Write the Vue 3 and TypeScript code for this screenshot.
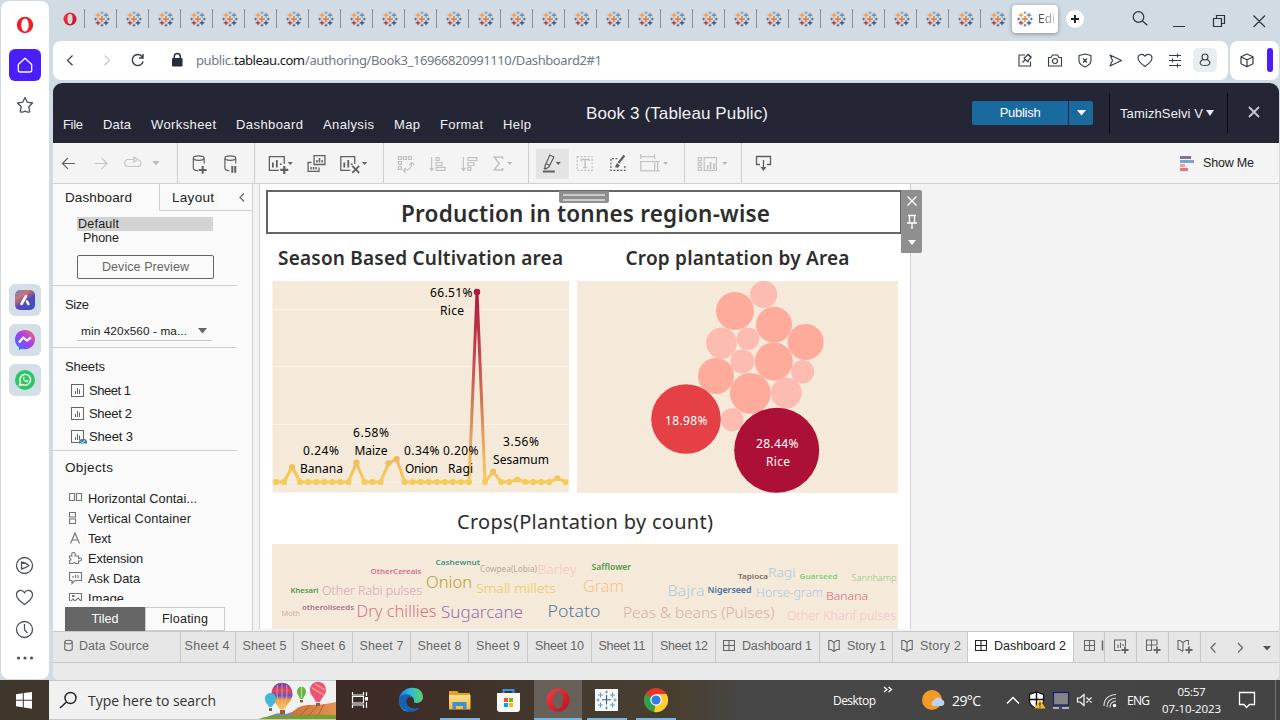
<script setup lang="ts">
interface Label { text: string; width: number }
interface Word { t: string; x: number; y: number; w: number; s: number; c: string; b?: boolean }

// Tracks a label out (or in) so that it occupies the given width.
const vFit = {
  mounted(el: HTMLElement, binding: { value: number }) {
    const range = document.createRange()
    range.selectNodeContents(el)
    const natural = range.getBoundingClientRect().width
    const count = Math.max(1, (el.textContent || '').length - 1)
    el.style.letterSpacing = `${(binding.value - natural) / count}px`
    el.style.width = `${binding.value}px`
  },
}

const tabs = Array.from({ length: 29 }, (_, i) => i)

const menus: Label[] = [
  { text: 'File', width: 20 },
  { text: 'Data', width: 28 },
  { text: 'Worksheet', width: 65 },
  { text: 'Dashboard', width: 67 },
  { text: 'Analysis', width: 51 },
  { text: 'Map', width: 26 },
  { text: 'Format', width: 43 },
  { text: 'Help', width: 28 },
]

const sheets: Label[] = [
  { text: 'Sheet 1', width: 42 },
  { text: 'Sheet 2', width: 43 },
  { text: 'Sheet 3', width: 44 },
]

const objects: (Label & { icon: string })[] = [
  { text: 'Horizontal Contai...', width: 109, icon: 'h' },
  { text: 'Vertical Container', width: 103, icon: 'v' },
  { text: 'Text', width: 23, icon: 't' },
  { text: 'Extension', width: 55, icon: 'e' },
  { text: 'Ask Data', width: 52, icon: 'a' },
  { text: 'Image', width: 36, icon: 'i' },
]

const bottomTabs: (Label & { cell: number; icon?: string; active?: boolean })[] = [
  { text: 'Data Source', width: 70, cell: 128, icon: 'db' },
  { text: 'Sheet 4', width: 45, cell: 55 },
  { text: 'Sheet 5', width: 44, cell: 58 },
  { text: 'Sheet 6', width: 45, cell: 59 },
  { text: 'Sheet 7', width: 44, cell: 58 },
  { text: 'Sheet 8', width: 44, cell: 58 },
  { text: 'Sheet 9', width: 44, cell: 59 },
  { text: 'Sheet 10', width: 49, cell: 64 },
  { text: 'Sheet 11', width: 47, cell: 61 },
  { text: 'Sheet 12', width: 48, cell: 63 },
  { text: 'Dashboard 1', width: 70, cell: 104, icon: 'grid' },
  { text: 'Story 1', width: 39, cell: 73, icon: 'book' },
  { text: 'Story 2', width: 41, cell: 75, icon: 'book' },
  { text: 'Dashboard 2', width: 72, cell: 106, icon: 'grid', active: true },
]

const raised: Record<number, number> = {
  2: 467, 10: 462.7, 14: 463.3, 15: 459, 25: 292, 27: 471.7, 30: 479.5, 35: 478.3,
}
const points = Array.from({ length: 37 }, (_, i) => ({ x: 276 + 8.04 * i, y: raised[i] ?? 482 }))
const line = points.map((p) => `${p.x.toFixed(1)},${p.y}`).join(' ')

const areaLabels: Word[] = [
  { t: '66.51%', x: 430, y: 297, w: 42.5, s: 12, c: '#000' },
  { t: 'Rice', x: 440, y: 315, w: 24, s: 12, c: '#000' },
  { t: '6.58%', x: 353, y: 437, w: 36, s: 12, c: '#000' },
  { t: 'Maize', x: 354.5, y: 455, w: 33, s: 12, c: '#000' },
  { t: '0.24%', x: 303, y: 455, w: 36, s: 12, c: '#000' },
  { t: 'Banana', x: 300, y: 473, w: 43, s: 12, c: '#000' },
  { t: '0.34%', x: 404, y: 455, w: 35.5, s: 12, c: '#000' },
  { t: 'Onion', x: 405, y: 473, w: 33, s: 12, c: '#000' },
  { t: '0.20%', x: 443, y: 455, w: 35.5, s: 12, c: '#000' },
  { t: 'Ragi', x: 448, y: 473, w: 25, s: 12, c: '#000' },
  { t: '3.56%', x: 503, y: 446, w: 36, s: 12, c: '#000' },
  { t: 'Sesamum', x: 493, y: 464, w: 56, s: 12, c: '#000' },
]

const bubbles: [number, number, number, string][] = [
  [735, 311, 19, '#feab9c'], [763.7, 294.5, 13.6, '#fdbcb1'], [774, 324.7, 18, '#feab9c'],
  [805.6, 342, 18, '#feab9c'], [721.5, 343, 15.4, '#fdbcb1'], [748, 338.7, 11.3, '#fdbcb1'],
  [742.4, 361.4, 12, '#fdbcb1'], [773.8, 361.4, 19, '#feab9c'], [802.7, 371.7, 11.6, '#fdbcb1'],
  [716, 376, 18, '#feab9c'], [750.4, 393.3, 20.4, '#feab9c'], [786.3, 393, 15.5, '#fdbcb1'],
  [732, 419.7, 11.5, '#fdbcb1'], [686, 419, 34.8, '#e44046'], [776.7, 450.3, 42.5, '#ad1037'],
]

const cloud: Word[] = [
  { t: 'OtherCereals', x: 370.5, y: 574, w: 51, s: 7.8, c: '#d4728f', b: true },
  { t: 'Cashewnut', x: 435.5, y: 565, w: 44.5, s: 7.8, c: '#3f9585', b: true },
  { t: 'Cowpea(Lobia)', x: 480, y: 572, w: 57, s: 8, c: '#b5a99c' },
  { t: 'Barley', x: 537.5, y: 574, w: 39, s: 12.5, c: '#f9c3cb' },
  { t: 'Onion', x: 426, y: 588, w: 46, s: 16, c: '#b99b2e' },
  { t: 'Small millets', x: 476, y: 593, w: 80, s: 12.5, c: '#edc860' },
  { t: 'Khesari', x: 290.5, y: 593, w: 28, s: 7.8, c: '#4d9a4a', b: true },
  { t: 'Other Rabi pulses', x: 322, y: 595, w: 100, s: 12.2, c: '#d3a4ba' },
  { t: 'Moth', x: 281.5, y: 616, w: 18.5, s: 7.8, c: '#d0ada2' },
  { t: 'otheroilseeds', x: 302, y: 610, w: 52, s: 7.8, c: '#a87093', b: true },
  { t: 'Dry chillies', x: 356.5, y: 617, w: 80, s: 15.5, c: '#d37288' },
  { t: 'Sugarcane', x: 441, y: 618, w: 82, s: 16, c: '#9a6aae' },
  { t: 'Potato', x: 547.5, y: 617, w: 53, s: 15.5, c: '#5477a0' },
  { t: 'Safflower', x: 591.5, y: 570, w: 39.5, s: 8, c: '#52964b', b: true },
  { t: 'Gram', x: 583, y: 592, w: 41, s: 16, c: '#f9be85' },
  { t: 'Tapioca', x: 738, y: 579, w: 30, s: 7.8, c: '#7b6960', b: true },
  { t: 'Ragi', x: 768, y: 577, w: 27.5, s: 12.5, c: '#a2c8df' },
  { t: 'Guarseed', x: 799.5, y: 579, w: 38, s: 7.8, c: '#86ca78', b: true },
  { t: 'Sannhamp', x: 851.5, y: 581, w: 45, s: 8.5, c: '#86ca78' },
  { t: 'Bajra', x: 667.5, y: 596, w: 37, s: 14, c: '#a6cbe0' },
  { t: 'Nigerseed', x: 707.5, y: 593, w: 44, s: 8.3, c: '#4c71a4', b: true },
  { t: 'Horse-gram', x: 756, y: 597, w: 67, s: 12, c: '#a6cbe0' },
  { t: 'Banana', x: 826, y: 600, w: 42, s: 11.5, c: '#d4607f' },
  { t: 'Peas & beans (Pulses)', x: 623, y: 618, w: 151.5, s: 15, c: '#d2b0a8' },
  { t: 'Other Kharif pulses', x: 787, y: 620, w: 109, s: 11.8, c: '#f5c3cf' },
]
</script>

<template>
  <div class="screen">
    <svg class="defs" width="0" height="0">
      <defs>
        <symbol id="tableau" viewBox="0 0 16 16">
          <path d="M8 5v6M5 8h6" stroke="#e8792b" stroke-width="1.4" />
          <path d="M4 1.8v4.6M1.7 4.1h4.6" stroke="#eb9a3c" stroke-width="1.1" />
          <path d="M12 1.8v4.6M9.7 4.1h4.6" stroke="#5b87a5" stroke-width="1.1" />
          <path d="M4 9.6v4.6M1.7 11.9h4.6" stroke="#c5203a" stroke-width="1.1" />
          <path d="M12 9.6v4.6M9.7 11.9h4.6" stroke="#1f4484" stroke-width="1.1" />
          <path d="M8 .4v2.8M6.6 1.8h2.8" stroke="#7199a6" stroke-width="1" />
          <path d="M8 12.8v2.8M6.6 14.2h2.8M.3 8h2.8M1.7 6.6v2.8M12.9 8h2.8M14.3 6.6v2.8" stroke="#5b6591" stroke-width="1" />
        </symbol>
        <linearGradient id="red" x1="0" y1="0" x2="1" y2="1">
          <stop offset="0" stop-color="#ff3b45" /><stop offset="1" stop-color="#b50e1c" />
        </linearGradient>
      </defs>
    </svg>

    <div class="browser">
      <aside class="rail">
        <svg width="49" height="680" viewBox="0 0 49 680">
          <rect x="1" y="1" width="48" height="678" rx="8" fill="#fff" />
          <ellipse cx="25" cy="25" rx="8.200" ry="8.200" fill="#ee1c2c" />
          <ellipse cx="25" cy="25" rx="3.700" ry="6.600" fill="#fff" />
          <rect x="9" y="49" width="32" height="32" rx="6" fill="#4b1eff" />
          <path d="M18.300 64.500l6.700-6.300 6.700 6.300V70a2 2 0 0 1-2 2h-9.400a2 2 0 0 1-2-2z" fill="none" stroke="#fff" stroke-width="1.300" stroke-linejoin="round" />
          <path d="M25 97.500l2.300 4.700 5.200.8-3.700 3.700.9 5.200q-2.400.9-4.700-.9-2.300 1.800-4.700.9l.9-5.200-3.700-3.700 5.200-.8z" fill="none" stroke="#4b525d" stroke-width="1.300" stroke-linejoin="round" />
          <rect v-for="y in [284, 324, 364]" :key="y" x="9" :y="y" width="32" height="32" rx="6" fill="#d3dee6" />
          <defs>
            <linearGradient id="aria" x1="0" y1="0" x2=".7" y2="1">
              <stop offset="0" stop-color="#4c93d5" /><stop offset=".35" stop-color="#cf716f" /><stop offset=".65" stop-color="#5447b8" /><stop offset="1" stop-color="#3a51c9" />
            </linearGradient>
            <linearGradient id="msg" x1="1" y1="0" x2="0" y2="1">
              <stop offset="0" stop-color="#ff6268" /><stop offset=".5" stop-color="#a53df5" /><stop offset="1" stop-color="#1583ff" />
            </linearGradient>
          </defs>
          <rect x="15" y="290" width="20" height="20" rx="5" fill="url(#aria)" />
          <path d="M21.500 304l4.500-8" stroke="#fff" stroke-width="2.600" stroke-linecap="round" /><path d="M27 301.500l1.300 2.500" stroke="#fff" stroke-width="2.600" stroke-linecap="round" />
          <path d="M25 330c5.600 0 10 4 10 9.600s-4.400 9.600-10 9.600c-1 0-2-.1-3-.4l-3 1.200v-2.600c-2.500-1.800-4-4.600-4-7.800 0-5.600 4.400-9.600 10-9.600z" fill="url(#msg)" />
          <path d="M19 342.500l4.200-5 3.600 3 4.200-3" fill="none" stroke="#fff" stroke-width="2.200" stroke-linejoin="round" />
          <circle cx="25" cy="380" r="10" fill="#29c862" />
          <path d="M19.500 385.500l.9-3.200a5.400 5.400 0 1 1 2.300 2.300z" fill="none" stroke="#fff" stroke-width="1.400" />
          <path d="M22.800 377.500c-.6 1.800 2.700 5.300 5 4.700.8-.3.700-1.200.5-1.500l-1.400-.7-.9.800c-1.100-.5-1.600-1-2-2l.7-.8-.7-1.300c-.5 0-.9.300-1.200.8z" fill="#fff" />
          <g fill="none" stroke="#4b525d" stroke-width="1.300">
            <circle cx="24.500" cy="565.500" r="8" /><path d="M21.500 562v7q4-.8 7.500-3.500-3.500-2.700-7.500-3.500z" stroke-linejoin="round" />
            <path d="M24.500 604.500c-4.500-3.200-8-6-8-9.600 0-5 6-6 8-2.200 2-3.800 8-2.800 8 2.200 0 3.600-3.500 6.400-8 9.600z" />
            <circle cx="24.500" cy="629.500" r="8" /><path d="M24.500 624v6l3 3" />
          </g>
          <g fill="#4b525d"><circle cx="18.500" cy="658" r="1.600" /><circle cx="25" cy="658" r="1.600" /><circle cx="31.500" cy="658" r="1.600" /></g>
        </svg>
      </aside>

      <div class="main">
        <div class="tabstrip">
          <svg class="opera" width="31" height="41" viewBox="53 0 31 41">
            <circle cx="70" cy="19" r="6.500" fill="url(#red)" /><ellipse cx="70" cy="19" rx="2.600" ry="5" fill="#d0dbe4" />
          </svg>
          <div v-for="t in tabs" :key="t" class="tab"><svg width="16" height="16"><use href="#tableau" /></svg></div>
          <div class="tab-active">
            <svg width="16" height="16"><use href="#tableau" /></svg><span class="edi">Edi</span>
          </div>
          <svg width="220" height="41" viewBox="1060 0 220 41">
            <circle cx="1075" cy="19" r="9" fill="#fff" />
            <path d="M1071 19h8M1075 15v8" stroke="#1c2430" stroke-width="2" />
            <g fill="none" stroke="#2b3340" stroke-width="1.200">
              <circle cx="1138.500" cy="17" r="5.300" /><path d="M1142.300 20.800l5 4.500" />
              <path d="M1173 26.500h12M1213.500 18.500h8v8h-8zM1216.500 18.500v-3h8v8h-3M1253.500 15.500l11.500 11.500M1265 15.500l-11.500 11.500" />
            </g>
          </svg>
        </div>

        <div class="address">
          <div class="bar">
            <svg width="143" height="39" viewBox="53 41 143 39">
              <path d="M72.500 55.500l-5 4.900 5 4.900" fill="none" stroke="#333b45" stroke-width="1.200" />
              <path d="M104.500 55.500l5 4.900-5 4.900" fill="none" stroke="#c4c9ce" stroke-width="1.200" />
              <path d="M142.300 56.800a5.500 5.500 0 1 0 .8 4.700M143 54v4h-4" fill="none" stroke="#333b45" stroke-width="1.400" />
              <rect x="172" y="58" width="10.500" height="8.500" rx="1" fill="#262f3a" /><path d="M174.300 58.500v-2a3 3 0 0 1 6 0v2" fill="none" stroke="#262f3a" stroke-width="1.500" />
            </svg>
            <div class="url"><span v-fit="38">public.</span><b v-fit="71">tableau.com</b><span v-fit="297">/authoring/Book3_16966820991110/Dashboard2#1</span></div>
            <svg class="push" width="218" height="39" viewBox="1010 41 218 39">
              <rect x="1193" y="48" width="24" height="24" rx="5" fill="#e8edf1" />
              <g fill="none" stroke="#333b45" stroke-width="1.100" stroke-linejoin="round">
                <path d="M1025 55h-6v11h11.500v-4.500M1022.500 62.500l3-3M1024 58l4 4 1-2.500 2-2-3-3-2 2zM1028 54l3.500 3.500" />
                <path d="M1048.500 57.500h2.500l1.500-2.500h5l1.500 2.500h2.500v8.500h-13z" /><circle cx="1055" cy="61" r="2.500" />
                <path d="M1085 54l6 1.500v5q0 4-6 6.500-6-2.500-6-6.500v-5zM1083 58.500l4 4M1087 58.500l-4 4" />
                <path d="M1110 55l11.500 5.500-11.500 5.500 2.500-5.500z" />
                <path d="M1145 66.500c-4-2.700-7-5.200-7-8.400 0-4 5-5 7-1.800 2-3.200 7-2.200 7 1.800 0 3.200-3 5.700-7 8.400z" />
                <path d="M1169 55.500h12M1169 60.500h12M1169 65.500h12M1177.500 53.500v4M1172.500 58.500v4M1177.500 63.500v4" />
                <circle cx="1205" cy="57" r="3" /><path d="M1202.800 59.500c-4.500 3-3 6 2.200 6s6.700-3 2.200-6" />
              </g>
            </svg>
          </div>
          <div class="side">
            <svg width="49" height="39" viewBox="1230 41 49 39">
              <path d="M1247 54l6 2.800v7l-6 3-6-3v-7zM1241 57l6 2.800 6-2.800M1247 60v7" fill="none" stroke="#333b45" stroke-width="1.200" stroke-linejoin="round" />
              <rect x="1267" y="48" width="6" height="24" rx="3" fill="#4b1eff" />
            </svg>
          </div>
        </div>

        <div class="app">
          <header>
            <nav><span v-for="m in menus" :key="m.text" v-fit="m.width">{{ m.text }}</span></nav>
            <h1><span v-fit="182">Book 3 (Tableau Public)</span></h1>
            <div class="publish"><div class="pub"><span v-fit="41">Publish</span></div><div class="pub-arrow"><svg width="9" height="6"><path d="M0 0h9l-4.500 5.500z" fill="#fff" /></svg></div></div>
            <div class="user"><span v-fit="83">TamizhSelvi V</span><svg width="8" height="7"><path d="M0 0h8l-4 6z" fill="#e8e8ee" /></svg></div>
            <svg class="close" width="12" height="12"><path d="M1 1l10 10M11 1l-10 10" stroke="#c9c9cf" stroke-width="1.800" /></svg>
          </header>

          <div class="toolbar">
            <svg width="125" height="40" viewBox="53 143 125 40" fill="none">
              <path d="M75 163.500h-12.500M68 158l-5.500 5.500 5.500 5.500" stroke="#5f5f5f" stroke-width="1.200" />
              <path d="M95 163.500h12.500M102 158l5.500 5.500-5.500 5.500" stroke="#c6c6c6" stroke-width="1.200" />
              <path d="M135 159.500h-7a3.600 3.600 0 0 0 0 7h10a3.300 3.300 0 0 0 .5-6.800M134.500 157l4 2.500-4 2.500z" stroke="#c6c6c6" stroke-width="1.200" />
              <path d="M153 161h7.500l-3.700 4.500z" fill="#bdbdbd" />
            </svg>
            <svg width="77" height="40" viewBox="178 143 77 40" fill="none" stroke="#5f5f5f" stroke-width="1.200">
              <path d="M193.500 158.500v9.500q0 2.500 5 3M204.500 158.500v5" /><ellipse cx="199" cy="158" rx="5.500" ry="2.300" /><path d="M203 166v8M199 170h8" stroke-width="2" />
              <path d="M225.500 158.500v9.500q0 2.500 4.500 3M236.500 158.500v5" /><ellipse cx="231" cy="158" rx="5.500" ry="2.300" /><path d="M233 166v7M236 166v7" stroke-width="2" />
            </svg>
            <svg width="129" height="40" viewBox="255 143 129 40" fill="none" stroke="#5f5f5f" stroke-width="1.300">
              <path d="M284.500 164v-7.500h-15v14h9.500" /><path d="M273 162.500v5M277 160v7.500M281 163.500v1.500" stroke-width="1.800" /><path d="M284.500 166v8M280.500 170h8" stroke-width="2.200" /><path d="M288 162h5l-2.500 3z" fill="#5f5f5f" stroke="none" />
              <path d="M314.500 155.500h11v9h-11zM312 162.500h-3.500v9h11v-4" /><path d="M317.500 160v2.500M320 158v4.500M322.700 160v2.500M311.500 167v2.500M314 167v2.500M316.500 167v2.500" stroke-width="1.500" />
              <path d="M355.500 164v-7.500h-14v14h9.500" /><path d="M345 162.500v5M349 160v7.500M352.500 163.500v1.500" stroke-width="1.800" /><path d="M353 166l7 7M360 166l-7 7" stroke-width="1.800" /><path d="M363 162h5l-2.500 3z" fill="#5f5f5f" stroke="none" />
            </svg>
            <svg width="145" height="40" viewBox="384 143 145 40" fill="none" stroke="#c1c1c1" stroke-width="1.200">
              <path d="M398.500 156.500h3v3h-3zM403.500 156.500h3v3h-3zM408.500 156.500h3v3h-3zM398.500 161.500h3v3h-3zM398.500 166.500h3v3h-3zM404 170.500q8 0 8-8M406 168l-2.500 2.500 2.500 2.500M409.500 165l2.500-2.500 2.500 2.500" />
              <path d="M432 157v13M430 168l2 2.500 2-2.500M436.500 157.500h3v3h-3zM436.500 162.500h6v3h-6zM436.500 167.500h9v3h-9z" />
              <path d="M464 157v13M462 168l2 2.500 2-2.500M468.500 157.500h9v3h-9zM468.500 162.500h6v3h-6zM468.500 167.500h3v3h-3z" />
              <path d="M503.500 159v-2h-8.500l5 6.500-5 6.500h8.500v-2" stroke-width="1.500" /><path d="M508 162h5l-2.500 3z" fill="#b5b5b5" stroke="none" />
            </svg>
            <svg width="156" height="40" viewBox="529 143 156 40" fill="none" stroke="#c1c1c1" stroke-width="1.200">
              <rect x="536" y="149" width="33" height="30" fill="#e4e4e4" stroke="none" />
              <path d="M543 171.500h12" stroke="#5f5f5f" stroke-width="2" /><path d="M545 166l5-11 4 2-5 10-3.500 2zM546 163.500l4 2M545 168l-1 1" stroke="#5f5f5f" /><path d="M556 162h5l-2.500 3z" fill="#5f5f5f" stroke="none" />
              <rect x="577.500" y="156.500" width="15" height="14" stroke-dasharray="2 1.500" /><path d="M581.500 161v-1.500h8v1.500M585.500 159.500v8M583.500 167.500h4" stroke-width="1.400" />
              <path d="M618 158.500h-6.500v12h14v-6" stroke="#5f5f5f" stroke-dasharray="2 1.500" /><path d="M625 155.500l-6 7.500" stroke="#5f5f5f" stroke-width="2.200" /><path d="M617.500 163l3 2.500q-2 3.500-5 1.500z" fill="#5f5f5f" stroke="none" />
              <path d="M641.500 156.500h14M641.500 154v5M655.500 154v5M641.500 161.500h14v9.500h-14zM658.500 161.500v9.500M656.500 161.500h4M656.500 171h4" /><path d="M664 162h5l-2.500 3z" fill="#b5b5b5" stroke="none" />
            </svg>
            <svg width="57" height="40" viewBox="685 143 57 40" fill="none" stroke="#c1c1c1" stroke-width="1.200">
              <path d="M698.500 157.500h3v3h-3zM698.500 162.500h3v3h-3zM698.500 167.500h3v3h-3zM704.500 157.500h12.500v13h-12.500z" /><path d="M708 165v4M711 162v7M714.500 163.500v5.500" stroke-width="1.800" /><path d="M723 162h5l-2.500 3z" fill="#b5b5b5" stroke="none" />
            </svg>
            <svg class="last" width="60" height="40" viewBox="742 143 60 40" fill="none" stroke="#5f5f5f" stroke-width="1.300"><path d="M760 164.500h-3.500v-8h14v8h-3.500M763.500 160v9" /><path d="M760.500 167h6l-3 4z" fill="#5f5f5f" stroke="none" /></svg>
            <div class="showme">
              <svg width="14" height="15"><path d="M0 0h11v3H0z" fill="#85738f" /><path d="M0 4h14v3H0z" fill="#7ea1c8" /><path d="M0 8h5v3H0z" fill="#efa27c" /><path d="M0 12h8v3H0z" fill="#e77480" /></svg>
              <span v-fit="51">Show Me</span>
            </div>
          </div>

          <div class="work">
            <aside class="panel">
              <div class="ptabs">
                <div class="on"><span v-fit="67">Dashboard</span></div>
                <div class="off"><span v-fit="42">Layout</span><svg width="6" height="9"><path d="M5 .5L1 4.500l4 4" fill="none" stroke="#666" stroke-width="1.200" /></svg></div>
              </div>
              <div class="device">
                <div class="default"><span v-fit="41">Default</span></div>
                <div class="phone"><span v-fit="36">Phone</span></div>
                <div class="preview"><span v-fit="87">Device Preview</span></div>
              </div>
              <div class="size">
                <div class="ptitle"><span v-fit="24">Size</span></div>
                <div class="select"><span v-fit="106">min 420x560 - ma...</span><svg width="9" height="6"><path d="M0 0h9l-4.500 5.500z" fill="#666" /></svg></div>
              </div>
              <div class="sheets">
                <div class="ptitle"><span v-fit="40">Sheets</span></div>
                <div v-for="(s, i) in sheets" :key="s.text" class="sheet">
                  <svg width="18" height="16" fill="none" stroke="#666"><rect x=".5" y="1.500" width="12" height="12" /><path d="M4.500 8v3M6.500 5v6M8.500 6.500v4.500" /><g v-if="i === 2"><path d="M8 14.500v-1.500a3 3 0 0 1 2.500-3h3.500a3 3 0 0 1 2 2.500v2z" fill="#3d7fa9" stroke="none" /><path d="M10 12.500l1.300 1.300L14 11.500" stroke="#fff" /></g></svg>
                  <span v-fit="s.width">{{ s.text }}</span>
                </div>
              </div>
              <div class="objects">
                <div class="ptitle"><span v-fit="48">Objects</span></div>
                <div class="olist">
                  <div v-for="o in objects" :key="o.text" class="object">
                    <svg width="19" height="14" fill="none" stroke="#757575" stroke-width="1.100">
                      <path v-if="o.icon === 'h'" d="M.5 2.500h5v7h-5zM7.500 2.500h5v7h-5z" />
                      <path v-if="o.icon === 'v'" d="M.5 1.500h6v4.500h-6zM.5 8h6v4.500h-6z" />
                      <path v-if="o.icon === 't'" d="M1.500 12.500L6 2l4.500 10.500M3 9h6" />
                      <path v-if="o.icon === 'e'" d="M.5 12.500v-3q3-1 0-2.500v-2h2.500q-1-3.500 1.500-3.500T6 5h3.500v2.500q3-1 3 1t-3 1.500v2.500H6.500q-1-2.500-2.500 0z" />
                      <path v-if="o.icon === 'a'" d="M.5 1.500h12v8H6l-3 3v-3H.5zM4 7V5M6.500 7V4M9 7V4" />
                      <path v-if="o.icon === 'i'" d="M.5 2.500h12v10H.5zM1 11l3-3 2 2 3-3 3 3M3.500 4.500h1.500v1h-1.500z" />
                    </svg>
                    <span v-fit="o.width">{{ o.text }}</span>
                  </div>
                </div>
              </div>
              <div class="mode"><div class="tiled"><span v-fit="27">Tiled</span></div><div class="floating"><span v-fit="46">Floating</span></div></div>
            </aside>

            <section class="canvas">
              <div class="page">
                <div class="headline"><span v-fit="369">Production in tonnes region-wise</span><i class="grip"></i>
                  <svg class="controls" width="21" height="63" fill="none" stroke="#fff" stroke-width="1.300"><path d="M6.500 6.500l9 9M15.500 6.500l-9 9M7 25.500h8M8.500 25.500v7M13.500 25.500v7M6 33h10M11 33v6" /><path d="M7 50h8l-4 5z" fill="#fff" stroke="none" /></svg>
                </div>
                <div class="row">
                  <figure class="area">
                    <figcaption><span v-fit="285">Season Based Cultivation area</span></figcaption>
                    <svg width="297" height="212" viewBox="272 281 297 212">
                      <defs><linearGradient id="heat" gradientUnits="userSpaceOnUse" x1="0" y1="292" x2="0" y2="482"><stop offset="0" stop-color="#b01842" /><stop offset=".25" stop-color="#c3374b" /><stop offset=".55" stop-color="#cf7258" /><stop offset=".87" stop-color="#f2b75a" /><stop offset="1" stop-color="#f4cc5b" /></linearGradient></defs>
                      <rect x="272.500" y="281" width="296.500" height="211.500" fill="#f5ead9" />
                      <path d="M273 309.500h296M273 366.500h296M273 424.500h296M273 482h296" stroke="#f9f3e9" />
                      <polyline :points="line" fill="none" stroke="url(#heat)" stroke-width="3" stroke-linejoin="round" />
                      <circle v-for="(p, i) in points" :key="i" :cx="p.x" :cy="p.y" r="3.100" fill="url(#heat)" />
                      <circle cx="477" cy="292" r="3.200" fill="#b01842" />
                      <text v-for="l in areaLabels" :key="l.t" :x="l.x" :y="l.y" :font-size="l.s" :fill="l.c" :textLength="l.w">{{ l.t }}</text>
                    </svg>
                  </figure>
                  <figure class="bubble">
                    <figcaption><span v-fit="224">Crop plantation by Area</span></figcaption>
                    <svg width="321" height="212" viewBox="577 281 321 212">
                      <rect x="577" y="281" width="321" height="212" fill="#f5ead9" />
                      <circle v-for="(b, i) in bubbles" :key="i" :cx="b[0]" :cy="b[1]" :r="b[2]" :fill="b[3]" />
                      <g fill="#fff" font-size="12"><text x="665" y="425" textLength="42.500">18.98%</text><text x="756" y="448" textLength="42.500">28.44%</text><text x="766" y="466" textLength="24">Rice</text></g>
                    </svg>
                  </figure>
                </div>
                <figure class="crops">
                  <figcaption><span v-fit="256">Crops(Plantation by count)</span></figcaption>
                  <svg width="626" height="85" viewBox="272 544 626 85">
                    <rect x="272" y="544" width="626" height="85" fill="#f5ead9" />
                    <text v-for="w in cloud" :key="w.t" :x="w.x" :y="w.y" :font-size="w.s" :fill="w.c" :textLength="w.w" lengthAdjust="spacingAndGlyphs" :font-weight="w.b ? 600 : w.s > 8 ? 300 : 400">{{ w.t }}</text>
                  </svg>
                </figure>
              </div>
            </section>
          </div>

          <div class="btabs">
            <div v-for="b in bottomTabs" :key="b.text" class="btab" :class="{ active: b.active, story: b.icon === 'book' }" :style="{ width: b.cell + 'px' }">
              <svg v-if="b.icon" width="12" height="13" fill="none" stroke="currentColor" stroke-width="1.100">
                <g v-if="b.icon === 'db'"><ellipse cx="4.500" cy="3" rx="3.700" ry="1.800" /><path d="M.8 3v7.500q3.700 2.500 7.400 0V3" /></g>
                <path v-if="b.icon === 'grid'" d="M.5 1.500h11v10h-11zM6 1.500v10M.5 6.500h11" />
                <path v-if="b.icon === 'book'" d="M6 3.500v9M.8 1.500h2.500L6 3.500l2.700-2h2.500v9H8.700L6 12.500l-2.700-2H.8z" />
              </svg>
              <span v-fit="b.width">{{ b.text }}</span>
            </div>
            <svg width="205" height="31" viewBox="1074 631 205 31" fill="none" stroke="#666" stroke-width="1.100">
              <path d="M1084.500 639.500h10v10h-10zM1089.500 639.500v10M1084.500 644.500h10" /><path d="M1102.500 639.500v10" stroke-width="1.500" />
              <path d="M1104.500 631v31M1136.500 631v31M1168.500 631v31M1200.500 631v31" stroke="#c8c8c8" />
              <path d="M1125.500 645v-6h-11v10.500h6M1118 643.500v3.500M1120.500 641.500v5.500M1123 643v2M1157 644v-5h-10.500v10.500h5M1151.500 639v10.500M1146.500 644h10.500M1188.500 644v-4.500h-2.500l-3 2-3-2h-2v9h2l3 2M1183 641.500v8.500" />
              <path d="M1125 645.500v7M1121.500 649h7M1157 645.500v7M1153.500 649h7M1189 645.500v7M1185.500 649h7" stroke-width="1.800" />
              <path d="M1215.500 642l-4.500 4.800 4.500 4.800M1238 642l4.500 4.800-4.500 4.800" stroke-width="1.300" /><path d="M1263 645h8l-4 4.500z" fill="#555" stroke="none" />
            </svg>
          </div>
          <div class="status"></div>
        </div>
      </div>
    </div>

    <footer class="taskbar">
      <svg width="49" height="40" viewBox="0 680 49 40"><rect y="680" width="49" height="40" fill="#3f372c" /><path d="M16 694.300l6.800-1v6.500H16zM23.800 693.100l8.200-1.200v7.900h-8.200zM16 700.800h6.800v6.500l-6.800-1zM23.800 700.800H32v7.900l-8.200-1.200z" fill="#fff" /></svg>
      <div class="search">
        <svg width="39" height="40" viewBox="49 680 39 40" fill="none" stroke="#222" stroke-width="1.400"><circle cx="70.500" cy="698" r="5.500" /><path d="M66.500 702l-6.500 6" /></svg>
        <span v-fit="128">Type here to search</span>
        <svg class="push" width="84" height="40" viewBox="252 680 84 40">
          <defs>
            <linearGradient id="b1" x2="0" y2="1"><stop offset="0" stop-color="#563fc8" /><stop offset=".3" stop-color="#e8455c" /><stop offset=".5" stop-color="#5d54c9" /><stop offset=".65" stop-color="#f79b3c" /><stop offset="1" stop-color="#f7c64c" /></linearGradient>
            <linearGradient id="field" x2="1" y2="0"><stop offset="0" stop-color="#c9733b" /><stop offset="1" stop-color="#e29354" /></linearGradient>
          </defs>
          <path d="M262 720q14-9 24-6 10-4 20-5v11z" fill="#7a86b8" />
          <path d="M290 715q8-11 20-10 14 0 26-3v18h-46z" fill="url(#field)" /><path d="M306 719l12-14M316 719l8-15M298 718l12-13" stroke="#b45f31" />
          <path d="M256 720q14-6 30-4 16-2 50-1v5z" fill="#76a02b" />
          <path d="M271.500 694c0-15 21-15 21 0 0 7-5 9-8 15h-5c-3-6-8-8-8-15z" fill="url(#b1)" /><path d="M277.500 685q-2 10 3 23M286.500 685q2 10-3 23M282 683v25" stroke="#f7b99b" stroke-width=".7" fill="none" /><path d="M280 710h5v4h-5z" fill="#965f36" />
          <path d="M265 699c0-8 11-8 11 0 0 4-3 5-4 8h-3c-1-3-4-4-4-8z" fill="#45b7d9" /><path d="M269 708h3v3h-3z" fill="#7e6346" />
          <path d="M297 692c0-7 9-7 9 0 0 3-2.500 4-3 7h-3c-.5-3-3-4-3-7z" fill="#63b848" /><path d="M301.500 687v11" stroke="#bde57d" /><path d="M300 700h3v2.500h-3z" fill="#7e6346" />
          <path d="M310 690c0-11 16-11 16 0 0 5-4 7-6 12h-4c-2-5-6-7-6-12z" fill="#ec527f" /><path d="M312 688l12 7M315 684l10 6" stroke="#f79d70" stroke-width="1.500" /><path d="M316 703h4v3h-4z" fill="#7e6346" />
        </svg>
      </div>
      <svg class="apps" width="344" height="40" viewBox="336 680 344 40">
        <defs>
          <linearGradient id="edge" x2="1" y2="0"><stop offset="0" stop-color="#1b78cf" /><stop offset=".45" stop-color="#2cb8df" /><stop offset="1" stop-color="#5ed25e" /></linearGradient>
          <linearGradient id="folder" x2="0" y2="1"><stop offset="0" stop-color="#fde08c" /><stop offset="1" stop-color="#f3b93e" /></linearGradient>
        </defs>
        <rect x="534" y="680" width="48" height="40" fill="#686159" />
        <path d="M440 718h40v2h-40zM534 718h48v2h-48zM587 718h40v2h-40zM636 718h40v2h-40z" fill="#76b5e8" />
        <g fill="none" stroke="#fff" stroke-width="1.200"><path d="M352.500 692v3h11v-3M352.500 708v-3h11v3M352.500 696.500h11v6.500h-11zM366.500 692v4M366.500 702v6" /></g><path d="M365 697h3v3.500h-3z" fill="#fff" />
        <path d="M399 701c-1-16 24-18 24-4 0 5-5 7-9 5.500 1-5-3-7.500-7-6-6 2-4 13 2 15-6 1-10-5-10-10.500z" fill="url(#edge)" />
        <path d="M399.500 698c3-5 12-5 13 0-4-2-7 1-6 5 1 5 9 7 14 4-8 10-23 3-21-9z" fill="#1562b5" />
        <path d="M449 691h8l2 2h11v16h-21z" fill="#e1a22c" /><path d="M449 695h21.500v14.500H449z" fill="url(#folder)" /><path d="M452.500 709v-7h14v7h-3.500v-3h-7v3z" fill="#3f91d1" />
        <path d="M503.500 694v-4h10v4" fill="none" stroke="#3197d8" stroke-width="2" /><path d="M497 693h23v16q0 3-3 3h-17q-3 0-3-3z" fill="#f7f7f7" /><path d="M504 698h4v4h-4z" fill="#f25022" /><path d="M509 698h4v4h-4z" fill="#7fba00" /><path d="M504 703h4v4h-4z" fill="#00a4ef" /><path d="M509 703h4v4h-4z" fill="#ffb900" />
        <circle cx="558" cy="700" r="11.500" fill="url(#red)" /><ellipse cx="558" cy="700" rx="5" ry="9" fill="#686159" />
        <rect x="595" y="689" width="23" height="22" fill="#f7f8f9" /><g stroke="#315f85" stroke-width="1.100"><path d="M606.500 695v9.500M602 699.700h9" /><path d="M600.500 692.500v5M598 695h5M612.500 692.500v5M610 695h5M600.500 702.500v5M598 705h5M612.500 702.500v5M610 705h5M606.500 690.500v3M605 692h3M606.500 706.500v3M605 708h3M596.500 700h3M598 698.500v3M613.500 700h3M615 698.500v3" stroke="#6c9cba" /></g>
        <circle cx="656" cy="700" r="12" fill="#e4382d" /><path d="M656 700l-10.400-6a12 12 0 0 0 9 17.900z" fill="#2da24b" /><path d="M656 700l-1.700 12a12 12 0 0 0 12.100-18H656z" fill="#fdd030" /><path d="M645.600 694L656 700l-4 10z" fill="#2da24b" /><circle cx="656" cy="700" r="5.800" fill="#fff" /><circle cx="656" cy="700" r="4.600" fill="#347ee9" />
      </svg>
      <div class="tray">
        <span class="desk" v-fit="43">Desktop</span>
        <svg width="69" height="40" viewBox="876 680 69 40"><path d="M884 687l3 2.500-3 2.500M888.500 687l3 2.500-3 2.500" fill="none" stroke="#fff" stroke-width="1.300" /><circle cx="932" cy="700" r="10" fill="#f49a27" /><path d="M933 706a3 3 0 0 1 1-5.500 4.500 4.500 0 0 1 8-1 3.400 3.400 0 0 1 0 6.500z" fill="#bcd4f2" /></svg>
        <span class="temp" v-fit="29">29°C</span>
        <svg width="145" height="40" viewBox="981 680 145 40" fill="none" stroke="#fff" stroke-width="1.200">
          <path d="M1007 703.500l6-6 6 6" stroke-width="1.400" />
          <path d="M1036.500 692l7 2.500v6q0 5-7 8-7-3-7-8v-6z" fill="#fff" stroke="#111" /><path d="M1036.500 692v16M1029.500 699.500h14" stroke="#111" stroke-width="1.500" /><path d="M1040 699.500l5.500 9h-11z" fill="#f6b91d" stroke="none" /><path d="M1040 702.500v3M1040 706.500v1" stroke="#222" />
          <rect x="1053.500" y="692.500" width="15" height="12.500" fill="#858585" stroke="#17206d" /><path d="M1053 708h6M1062 708h7" stroke="#aab0ce" stroke-width="2" />
          <path d="M1077.500 698h2.500l4-3.500v11l-4-3.500h-2.500zM1086.500 697.500l5 5M1091.500 697.500l-5 5" />
          <path d="M1104 706c0-7 5-11 12-11.500M1107 707c0-5.500 3.500-8.500 9-9M1110 707.500c0-4 2.500-6 6-6.500" stroke="#ddd" /><circle cx="1114.500" cy="705.500" r="1.700" fill="#fff" stroke="none" />
        </svg>
        <span class="lang" v-fit="23">ENG</span>
        <div class="clock"><span v-fit="28">05:57</span><span v-fit="59">07-10-2023</span></div>
        <svg width="53" height="40" viewBox="1227 680 53 40" fill="none"><path d="M1239.500 692.500h15v12h-5l-3 3-2.500-3h-4.500z" stroke="#fff" stroke-width="1.300" /><path d="M1275.500 680v40" stroke="#777" /></svg>
      </div>
    </footer>
  </div>
</template>

<style>
html, body { margin: 0; overflow: hidden; background: #d0dbe4; }
</style>

<style scoped>
* { box-sizing: border-box; }
svg { display: block; flex: none; }
span, b { display: inline-block; white-space: nowrap; flex: none; }
.screen { width: 1280px; height: 720px; display: flex; flex-direction: column; background: #d0dbe4; font-family: "Liberation Sans", Arial, sans-serif; font-size: 13px; color: #222; overflow: hidden; }
.defs { position: absolute; }
.browser { height: 680px; display: flex; }
.rail { width: 53px; }
.main { width: 1227px; display: flex; flex-direction: column; }
.tabstrip { height: 41px; display: flex; }
.tab { width: 32px; height: 19px; margin-top: 9px; border-left: 1px solid #87919a; padding: 2px 0 0 9px; }
.tab-active { width: 46px; height: 28px; margin: 5px 2px 0 0; background: #fff; border-radius: 4px; box-shadow: 0 1px 4px rgba(40, 50, 60, .45); display: flex; align-items: center; padding-left: 5px; }
.edi { font: 12px/28px "Open Sans", sans-serif; margin-left: 5px; background: linear-gradient(90deg, #444 20%, #ddd 100%); background-clip: text; color: transparent; width: 18px; overflow: hidden; }
.address { height: 42px; display: flex; gap: 2px; align-items: flex-start; }
.bar { width: 1175px; height: 39px; border-radius: 8px; background: #fff; display: flex; }
.side { width: 49px; height: 39px; border-radius: 8px; background: #fff; }
.push { margin-left: auto; }
.url { font: 13px/38px "Noto Sans", "Open Sans", sans-serif; color: #6e7984; white-space: nowrap; }
.url b { font-weight: 400; color: #111820; }
.app { width: 1226px; height: 597px; border-radius: 9px 9px 6px 6px; overflow: hidden; background: #f3f3f3; display: flex; flex-direction: column; }
header { height: 60px; background: #242636; display: flex; color: #f0f0f4; flex: none; }
nav { width: 533px; padding-left: 10px; display: flex; gap: 20px; line-height: 16px; padding-top: 34px; font-size: 13px; }
h1 { margin: 0; width: 386px; font-weight: 400; font-size: 17px; line-height: 61px; }
.publish { display: flex; gap: 1px; margin-top: 18px; height: 24px; color: #fff; width: 137px; }
.pub { width: 96px; background: #1b6a9f; border-radius: 2px 0 0 2px; text-align: center; line-height: 24px; }
.pub-arrow { width: 24px; background: #1b6a9f; border-radius: 0 2px 2px 0; display: flex; align-items: center; justify-content: center; }
.user { width: 119px; height: 40px; margin-top: 10px; border: solid #0b0c14; border-width: 0 1px; padding-left: 10px; display: flex; align-items: center; gap: 3px; }
.close { margin: 23px 0 0 20px; }
.toolbar { height: 40px; flex: none; background: #f4f4f4; display: flex; }
.toolbar > svg { border-right: 1px solid #cfcfcf; }
.toolbar > .last { border: 0; }
.showme { margin-left: auto; margin-right: 24px; width: 75px; display: flex; align-items: center; gap: 9px; font-size: 12.500px; }
.work { height: 448px; flex: none; display: flex; border-top: 1px solid #d0d0d0; }
.panel { width: 200px; background: #fafafa; border-right: 1px solid #d0d0d0; height: 447px; display: flex; flex-direction: column; }
.ptabs { height: 27px; display: flex; line-height: 27px; flex: none; font-size: 13.500px; }
.on { width: 106px; padding-left: 12px; }
.off { flex: 1; border: solid #d0d0d0; border-width: 0 0 1px 1px; padding-left: 12px; display: flex; align-items: center; }
.off svg { margin-left: 25px; }
.device { height: 75px; border-bottom: 1px solid #d0d0d0; width: 184px; padding: 6px 0 0 24px; flex: none; line-height: 14px; font-size: 12.500px; }
.default { background: #d3d3d3; width: 136px; height: 14px; padding-left: 1px; }
.phone { padding-left: 6px; height: 14px; }
.preview { border: 1px solid #666; border-radius: 2px; width: 137px; height: 24px; line-height: 22px; text-align: center; color: #666; margin-top: 10px; }
.size { height: 62px; border-bottom: 1px solid #d0d0d0; width: 184px; flex: none; }
.ptitle { padding-left: 12px; height: 35px; line-height: 37px; }
.select { width: 135px; height: 20px; margin-left: 24px; border-bottom: 1px solid #c4c4c4; display: flex; align-items: center; padding-left: 4px; font-size: 11.800px; gap: 11px; }
.sheets { height: 103px; width: 184px; border-bottom: 1px solid #d0d0d0; flex: none; }
.sheets .ptitle { height: 31px; }
.sheet { height: 23px; padding-left: 18px; display: flex; align-items: center; }
.objects { height: 150px; overflow: hidden; flex: none; }
.objects .ptitle { height: 37px; line-height: 34px; font-size: 13.500px; }
.object { height: 20px; padding-left: 16px; display: flex; align-items: center; font-size: 12.800px; }
.mode { margin: 6px 0 0 12px; display: flex; height: 24px; font-size: 12.500px; text-align: center; line-height: 24px; }
.tiled { width: 80px; background: #666; color: #fff; }
.floating { width: 80px; border: 1px solid #ccc; line-height: 22px; }
.canvas { padding-left: 6px; }
.page { width: 652px; height: 445px; background: #fff; border: solid #d0d0d0; border-width: 0 1px; padding: 6px 0 0 6px; font-family: "Noto Sans", "Open Sans", sans-serif; color: #2d2d2d; }
.headline { position: relative; width: 636px; height: 44px; border: 2px solid #666; font-size: 22.500px; font-weight: 600; line-height: 43px; text-align: center; padding-left: 3px; }
.grip { position: absolute; left: 291px; top: -1px; width: 50px; height: 12px; border-radius: 0 0 2px 2px; border: solid #8f8f8f; border-width: 3px 4px 2px; background: linear-gradient(#ccc 2px, #8f8f8f 2px, #8f8f8f 5px, #ccc 5px); }
.controls { position: absolute; left: 633px; top: -2px; background: #8f8f8f; border-radius: 0 2px 2px 0; }
.row { display: flex; gap: 8px; padding: 0 0 0 6px; }
figure { margin: 0; }
figcaption { text-align: center; height: 47px; line-height: 49px; font-size: 19px; font-weight: 600; }
.crops { width: 626px; margin-left: 6px; }
.crops figcaption { height: 51px; line-height: 58px; font-size: 20px; font-weight: 400; }
.btabs { height: 32px; flex: none; background: #e6e6e6; border: solid #c8c8c8; border-width: 1px 0; display: flex; color: #666; font-size: 12.500px; }
.btab { height: 30px; border-right: 1px solid #c8c8c8; display: flex; align-items: center; justify-content: center; gap: 7px; padding-bottom: 3px; flex: none; }
.btab:first-child { justify-content: flex-start; padding-left: 11px; gap: 3px; }
.btab:nth-child(2) { padding-right: 2px; }
.story { padding-left: 2px; }
.active { background: #fff; color: #222; }
.status { height: 17px; background: #eaeaea; }
.taskbar { height: 40px; display: flex; background: linear-gradient(90deg, #403529 0, #3d2b25 30%, #443d30 47%, #493f30 53%, #464646 58%, #444 100%); font-family: "Open Sans", "Noto Sans", sans-serif; color: #fff; }
.search { width: 287px; flex: none; background: #f1f1f1; border: solid #c6c9cc; border-width: 1px 0; display: flex; align-items: center; color: #333; font-size: 14px; overflow: hidden; }
.tray { display: flex; flex: none; width: 600px; align-items: center; padding-left: 153px; font-size: 12px; }
.temp { margin-left: 7px; font-size: 14px; }
.lang { margin-left: 1px; }
.clock { width: 77px; padding-left: 6px; display: flex; flex-direction: column; align-items: center; line-height: 17px; font-size: 11.500px; padding-bottom: 1px; }
</style>
